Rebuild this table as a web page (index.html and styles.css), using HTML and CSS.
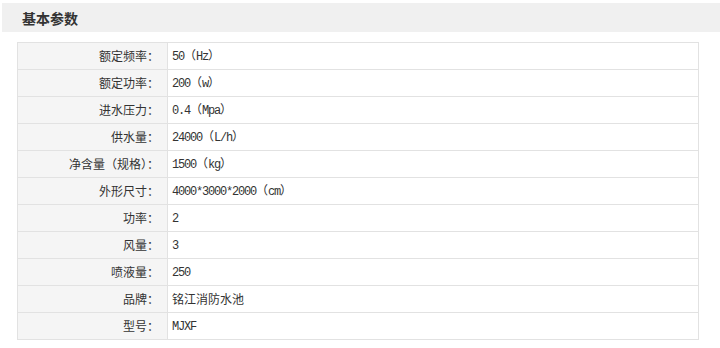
FILE: index.html
```html
<!DOCTYPE html>
<html lang="zh-CN">
<head>
<meta charset="utf-8">
<link rel="stylesheet" href="styles.css">
</head>
<body>
<div class="page">
  <div class="title-bar"><h2 class="title">基本参数</h2></div>
  <table class="params">
    <tr><th>额定频率：</th><td><span class="lt">50</span>（<span class="lt">Hz</span>）</td></tr>
    <tr><th>额定功率：</th><td><span class="lt">200</span>（<span class="lt">w</span>）</td></tr>
    <tr><th>进水压力：</th><td><span class="lt">0.4</span>（<span class="lt">Mpa</span>）</td></tr>
    <tr><th>供水量：</th><td><span class="lt">24000</span>（<span class="lt">L/h</span>）</td></tr>
    <tr><th>净含量（规格）：</th><td><span class="lt">1500</span>（<span class="lt">kg</span>）</td></tr>
    <tr><th>外形尺寸：</th><td><span class="lt">4000*3000*2000</span>（<span class="lt">cm</span>）</td></tr>
    <tr><th>功率：</th><td><span class="lt">2</span></td></tr>
    <tr><th>风量：</th><td><span class="lt">3</span></td></tr>
    <tr><th>喷液量：</th><td><span class="lt">250</span></td></tr>
    <tr><th>品牌：</th><td>铭江消防水池</td></tr>
    <tr><th>型号：</th><td><span class="lt">MJXF</span></td></tr>
  </table>
</div>
</body>
</html>
```
FILE: styles.css
```css
html, body {
  margin: 0;
  padding: 0;
  background: #fff;
}
body {
  font-family: "Noto Sans CJK SC", sans-serif;
  font-size: 12px;
  color: #333;
}
.page {
  padding: 3px 0 0 2px;
}
.title-bar {
  background: #f0f0f0;
  height: 29px;
  display: flex;
  align-items: center;
  padding-left: 20px;
}
.title {
  margin: 0;
  font-size: 14px;
  font-weight: bold;
  color: #333;
  line-height: 1;
}
.params {
  margin: 10px 0 0 15px;
  border-collapse: collapse;
  width: 682px;
  table-layout: fixed;
}
.params th,
.params td {
  border: 1px solid #e2e2e2;
  height: 26px;
  padding: 0;
  line-height: 14px;
  font-weight: normal;
  vertical-align: middle;
}
.params th {
  width: 141px;
  background: #f5f5f5;
  text-align: right;
  padding-right: 8px;
}
.params td {
  background: #fff;
  text-align: left;
  padding-left: 4px;
}
.lt {
  font-family: "Liberation Mono", monospace;
  letter-spacing: -1.2px;
}
```
